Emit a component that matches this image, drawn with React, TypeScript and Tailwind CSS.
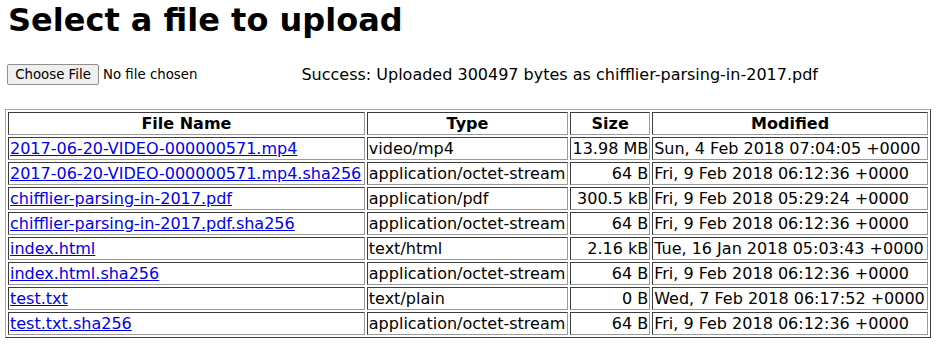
const rows = [
  { name: "2017-06-20-VIDEO-000000571.mp4", type: "video/mp4", size: "13.98 MB", modified: "Sun, 4 Feb 2018 07:04:05 +0000" },
  { name: "2017-06-20-VIDEO-000000571.mp4.sha256", type: "application/octet-stream", size: "64 B", modified: "Fri, 9 Feb 2018 06:12:36 +0000" },
  { name: "chifflier-parsing-in-2017.pdf", type: "application/pdf", size: "300.5 kB", modified: "Fri, 9 Feb 2018 05:29:24 +0000" },
  { name: "chifflier-parsing-in-2017.pdf.sha256", type: "application/octet-stream", size: "64 B", modified: "Fri, 9 Feb 2018 06:12:36 +0000" },
  { name: "index.html", type: "text/html", size: "2.16 kB", modified: "Tue, 16 Jan 2018 05:03:43 +0000" },
  { name: "index.html.sha256", type: "application/octet-stream", size: "64 B", modified: "Fri, 9 Feb 2018 06:12:36 +0000" },
  { name: "test.txt", type: "text/plain", size: "0 B", modified: "Wed, 7 Feb 2018 06:17:52 +0000" },
  { name: "test.txt.sha256", type: "application/octet-stream", size: "64 B", modified: "Fri, 9 Feb 2018 06:12:36 +0000" },
];

// inset-looking cell borders, like an old border="1" table
const cell =
  "border border-solid border-t-[#3c3c3c] border-l-[#3c3c3c] border-b-[#9a9a9a] border-r-[#9a9a9a] p-px leading-[19px] whitespace-nowrap";

export default function App() {
  return (
    <div className="bg-white text-black text-[16px] min-h-[345px]" style={{ fontFamily: '"DejaVu Sans", sans-serif' }}>
      <h1 className="ml-2 pt-[2px] text-[32px] font-bold leading-[37px]">Select a file to upload</h1>

      <div className="mt-[25px] flex items-center h-[21px]">
        <span className="ml-[7px] inline-flex h-[21px] w-[92px] items-center justify-center rounded-[2px] border border-[#8f8f8f] bg-[#efefef] text-[13.33px]">
          Choose File
        </span>
        <span className="ml-[4px] text-[13.33px]">No file chosen</span>
        <span className="ml-[104px] mt-[1px]">Success: Uploaded 300497 bytes as chifflier-parsing-in-2017.pdf</span>
      </div>

      <table className="ml-[5px] mt-[24px] w-[926px] border-separate border-spacing-[2px] border border-solid border-t-[#a8a8a8] border-l-[#a8a8a8] border-b-[#3c3c3c] border-r-[#3c3c3c]">
        <thead>
          <tr>
            <th className={`${cell} text-center font-bold`}>File Name</th>
            <th className={`${cell} text-center font-bold`}>Type</th>
            <th className={`${cell} text-center font-bold`}>Size</th>
            <th className={`${cell} text-center font-bold`}>Modified</th>
          </tr>
        </thead>
        <tbody>
          {rows.map((r) => (
            <tr key={r.name}>
              <td className={`${cell} text-left`}>
                <a href="#" className="text-[#0000ee] underline">{r.name}</a>
              </td>
              <td className={`${cell} text-left`}>{r.type}</td>
              <td className={`${cell} text-right`}>{r.size}</td>
              <td className={`${cell} text-left`}>{r.modified}</td>
            </tr>
          ))}
        </tbody>
      </table>
    </div>
  );
}
